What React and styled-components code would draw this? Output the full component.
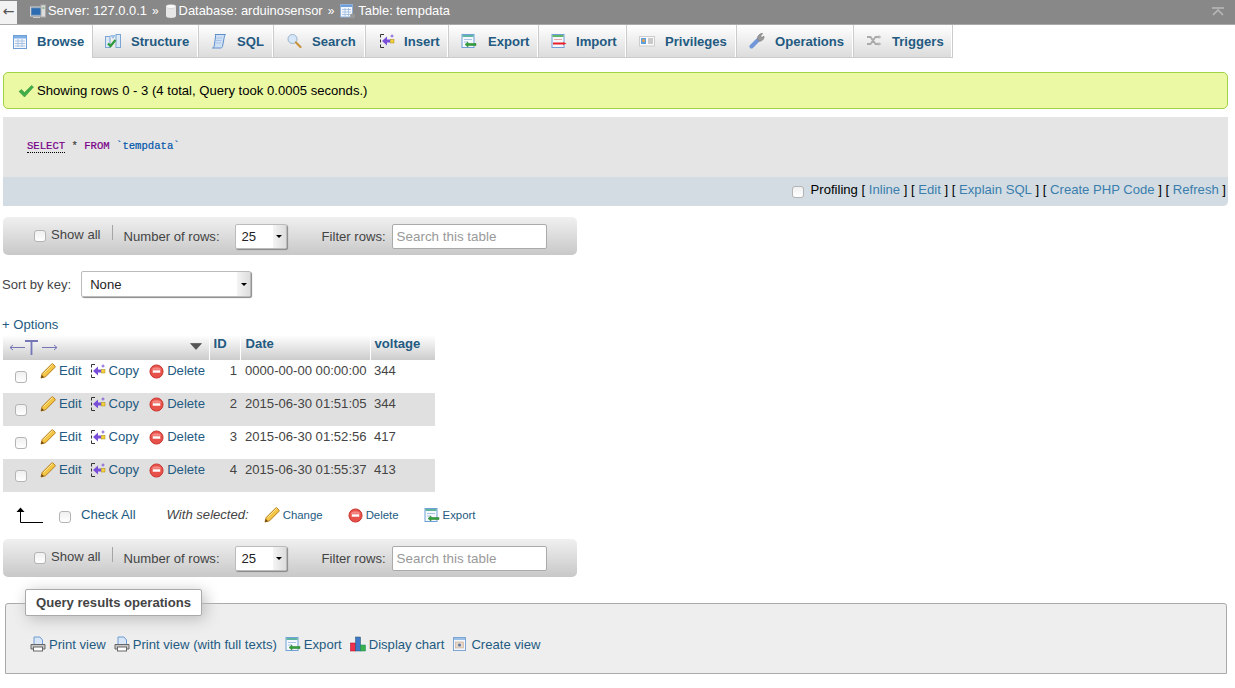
import React from 'react';
import styled, { createGlobalStyle } from 'styled-components';

const GlobalStyle = createGlobalStyle`
  html, body { margin: 0; padding: 0; background: #fff; }
  body {
    font-family: "Liberation Sans", Arial, sans-serif;
    font-size: 13.1px;
    color: #444;
    overflow: hidden;
  }
`;

const Page = styled.div`
  width: 1235px;
  height: 688px;
  overflow: hidden;
`;

const TopBar = styled.div`
  height: 24px;
  background: #888;
  border-bottom: 1px solid #aaa;
  display: flex;
  align-items: center;
  color: #fff;
  font-size: 12.9px;
`;

const BackBox = styled.div`
  width: 17px;
  height: 23px;
  box-sizing: border-box;
  padding-bottom: 3px;
  background: #f2f2f2;
  color: #555;
  font-family: "DejaVu Sans", sans-serif;
  font-size: 14px;
  display: flex;
  align-items: center;
  justify-content: center;
  margin-right: 13px;
`;

const Crumb = styled.span`
  display: inline-flex;
  align-items: center;
  gap: 2px;
  white-space: nowrap;
  margin-top: -3px;
`;

const Sep = styled.span`
  margin: -3px 6px 0 5px;
  font-size: 12px;
`;

const Collapse = styled.svg`
  margin-left: auto;
  margin-right: 11px;
`;

const Tabs = styled.div`
  display: flex;
  height: 33px;
  width: 953px;
  background: linear-gradient(#fff, #dcdcdc);
  border-bottom: 1px solid #ccc;
  box-sizing: border-box;
`;

const Tab = styled.a`
  display: flex;
  align-items: center;
  width: ${p => p.$w}px;
  box-sizing: border-box;
  padding-left: ${p => p.$pad}px;
  gap: ${p => p.$gap}px;
  font-weight: bold;
  color: #235a81;
  white-space: nowrap;
  border-right: 1px solid #ccc;
  box-shadow: inset -1px 0 0 #fff;
  background: ${p => (p.$active ? '#fff' : 'transparent')};
  height: ${p => (p.$active ? '33px' : '32px')};
`;

const Message = styled.div`
  margin: 14px 7px 0 3px;
  height: 37px;
  box-sizing: border-box;
  background: #ebf8a4;
  border: 1px solid #a2d246;
  border-radius: 5px;
  display: flex;
  align-items: center;
  padding-left: 14px;
  gap: 3px;
  color: #000;
`;

const SqlBox = styled.div`
  margin: 8px 7px 0 3px;
  background: #e5e5e5;
  border-radius: 0 0 5px 0;
`;

const SqlText = styled.div`
  height: 60px;
  box-sizing: border-box;
  padding: 22px 0 0 24px;
  font-family: "Liberation Mono", "DejaVu Sans Mono", monospace;
  font-size: 10.6px;
  line-height: 14px;
  color: #444;
  -webkit-text-stroke: 0.2px;
`;

const Keyword = styled.span`
  color: #708;
  border-bottom: ${p => (p.$dotted ? '1px dotted #000' : 'none')};
`;

const Quoted = styled.span`
  color: #05a;
`;

const SqlTools = styled.div`
  height: 29px;
  box-sizing: border-box;
  padding: 0 2px 5px 0;
  background: #d3dce3;
  border-radius: 0 0 5px 0;
  display: flex;
  align-items: center;
  justify-content: flex-end;
  color: #000;
  white-space: pre;
`;

const BlueLink = styled.a`
  color: #3a7ead;
`;

const Checkbox = styled.span`
  display: inline-block;
  flex: none;
  width: 10px;
  height: 10px;
  background: linear-gradient(#f0f0f0, #fff);
  border: 1px solid #b4b4b4;
  border-radius: 3px;
  margin: ${p => p.$m || '0'};
`;

const NavBar = styled.div`
  width: 574px;
  height: 38px;
  box-sizing: border-box;
  margin: ${p => p.$m};
  background: linear-gradient(#f0f0f0, #c8c8c8);
  border-radius: 5px;
  display: flex;
  align-items: center;
  padding-left: 31px;
  color: #444;
`;

const ShowAll = styled.span`
  margin-left: 5px;
  position: relative;
  top: -2px;
`;

const Pipe = styled.span`
  width: 1px;
  height: 15px;
  background: #a5a5a5;
  margin: 0 11px 0 11px;
  position: relative;
  top: -4px;
`;

const FakeSelect = styled.div`
  width: ${p => p.$w}px;
  height: ${p => p.$h}px;
  box-sizing: border-box;
  margin-left: ${p => p.$ml}px;
  background: #fff;
  border: 1px solid #bbb;
  border-radius: 2px;
  box-shadow: 1px 1px 1px #888;
  display: flex;
  align-items: center;
  padding-left: ${p => p.$pl}px;
  color: #222;
  position: relative;
`;

const SelectArrow = styled.span`
  position: absolute;
  right: 0;
  top: 0;
  bottom: 0;
  width: 13px;
  background: linear-gradient(90deg, #f4f4f4, #ddd);
  display: flex;
  align-items: center;
  justify-content: center;
  &::after {
    content: '';
    border-left: 3px solid transparent;
    border-right: 3px solid transparent;
    border-top: 3px solid #000;
  }
`;

const FilterLabel = styled.span`
  margin-left: 35px;
`;

const SearchInput = styled.div`
  width: 155px;
  height: 25px;
  box-sizing: border-box;
  margin-left: 6px;
  background: #fff;
  border: 1px solid #aaa;
  border-radius: 2px;
  display: flex;
  align-items: center;
  padding-left: 4px;
  color: #999;
  font-size: 13.4px;
`;

const SortRow = styled.div`
  margin: 16px 0 0 2px;
  display: flex;
  align-items: center;
  color: #444;
`;

const Options = styled.div`
  margin: 18px 0 0 2px;
  height: 19px;
  line-height: 19px;
  color: #235a81;
`;

const Table = styled.table`
  margin: 1px 0 0 3px;
  width: 432px;
  border-collapse: collapse;
  table-layout: fixed;
  color: #444;
`;

const Th = styled.th`
  height: 25px;
  padding: 0 0 0 ${p => p.$pl || 4}px;
  box-sizing: border-box;
  background: linear-gradient(#fff, #ccc);
  border-right: ${p => (p.$last ? 'none' : '1px solid #fff')};
  color: #235a81;
  font-weight: bold;
  text-align: left;
  vertical-align: top;
  line-height: 17px;
`;

const HeadTools = styled.div`
  display: flex;
  align-items: center;
  justify-content: space-between;
  padding: 0 7px 0 6px;
  height: 25px;
`;

const SortMark = styled.svg`
  flex: none;
  margin-top: -3px;
`;

const Tr = styled.tr`
  background: ${p => (p.$odd ? '#e0e0e0' : '#fff')};
`;

const Td = styled.td`
  height: 33px;
  padding: 2px ${p => p.$pr || 0}px 0 ${p => p.$pl || 0}px;
  box-sizing: border-box;
  vertical-align: top;
  line-height: 18px;
  text-align: ${p => p.$align || 'left'};
  white-space: nowrap;
`;

const Actions = styled.div`
  display: flex;
  align-items: flex-start;
  padding-left: 12px;
`;

const ActionLink = styled.a`
  display: inline-flex;
  align-items: center;
  gap: 3px;
  color: #235a81;
  margin-left: ${p => p.$ml || 0}px;
  white-space: nowrap;
`;

const BulkRow = styled.div`
  display: flex;
  align-items: center;
  height: 20px;
  margin: 13px 0 0 16px;
  color: #235a81;
`;

const CheckAll = styled.span`
  margin-top: -2px;
`;

const WithSelected = styled.em`
  color: #444;
  margin: -2px 15px 0 31px;
`;

const SmallAction = styled.a`
  display: inline-flex;
  align-items: center;
  gap: 3px;
  color: #235a81;
  font-size: 11.4px;
  margin-right: ${p => p.$mr}px;
`;

const Fieldset = styled.div`
  position: relative;
  margin: 26px 8px 0 5px;
  height: 71px;
  box-sizing: border-box;
  background: #eee;
  border: 1px solid #aaa;
  border-radius: 3px 3px 0 0;
  display: flex;
  align-items: center;
  padding: 11px 0 0 24px;
  gap: 8px;
`;

const Legend = styled.div`
  position: absolute;
  left: 19px;
  top: -15px;
  width: 177px;
  height: 27px;
  box-sizing: border-box;
  background: #fff;
  border: 1px solid #aaa;
  border-radius: 2px;
  box-shadow: 3px 3px 15px #bbb;
  display: flex;
  align-items: center;
  justify-content: center;
  font-weight: bold;
  color: #444;
`;

const OpLink = styled.a`
  display: inline-flex;
  align-items: center;
  gap: 3px;
  color: #235a81;
  white-space: nowrap;
`;

const Ico = ({ s = 16, children }) => (
  <svg width={s} height={s} viewBox="0 0 16 16" style={{ flex: 'none' }}>
    {children}
  </svg>
);

const SheetIcon = ({ s }) => (
  <Ico s={s}>
    <rect x="1.5" y="1.5" width="13" height="13" fill="#f4f8fd" stroke="#6e9fd6" />
    <rect x="2" y="2" width="12" height="2.5" fill="#7fb0e4" />
    <path d="M3 7h10M3 9.5h10M3 12h10M6 5v8M10 5v8" stroke="#a9c4e2" fill="none" />
  </Ico>
);

const StructureIcon = () => (
  <Ico>
    <rect x="0.5" y="3.5" width="4.5" height="11" fill="#dbe8f6" stroke="#7ba6d4" />
    <rect x="11" y="1.5" width="4.5" height="13" fill="#dbe8f6" stroke="#7ba6d4" />
    <path d="M5 2h6l-3 4z" fill="#9cc0e6" />
    <path d="M3 10.5l2.500 2.500 5-6" stroke="#2f9a3a" strokeWidth="2.200" fill="none" />
  </Ico>
);

const SqlIcon = () => (
  <Ico>
    <path d="M4 1.500h10.500c-1 1-1 2-1.500 4l-1.500 8c-.3 1-1 1.500-2 1.500H1.500c1 0 1.500-.8 1.700-1.800L4.500 4C4.700 3 4.500 2 4 1.500z" fill="#cfe0f5" stroke="#5f8fcb" />
    <path d="M5.500 5h5.500M5 7.500h5.500M4.500 10h5.500" stroke="#a8c4e8" fill="none" />
  </Ico>
);

const SearchIcon = () => (
  <Ico>
    <circle cx="6.500" cy="6" r="4.500" fill="#d5e7f8" stroke="#9ab2c9" />
    <path d="M10 9.500l4.500 4.500" stroke="#c8913c" strokeWidth="2.200" strokeLinecap="round" />
  </Ico>
);

const BracketArrow = ({ fill = '#7a4fd8' }) => (
  <Ico>
    <path d="M5 1.500H1.500v3M1.500 6.500v3M1.500 11.500v3H5" stroke="#333" fill="none" />
    <path d="M3 8l5-4.500V6.500h3v3H8v3z" fill={fill} />
    <rect x="11.500" y="6.500" width="3.500" height="3.500" fill="#f5d03c" stroke="#a88a10" strokeWidth=".5" />
    <path d="M13 1.500v3M11.500 3h3" stroke={fill} strokeWidth=".9" />
  </Ico>
);

const ExportIcon = ({ s }) => (
  <Ico s={s}>
    <rect x="1" y="1.500" width="12" height="13" fill="#f4f8fd" stroke="#6e9fd6" />
    <rect x="1.500" y="2" width="11" height="2" fill="#5fb5a0" />
    <path d="M3 6.500h8M3 9h4" stroke="#a9c4e2" />
    <path d="M4 11.500l3-2.500v1.500h8v2H7V14z" fill="#35a03c" stroke="#1e7a26" strokeWidth=".5" />
  </Ico>
);

const ImportIcon = () => (
  <Ico>
    <rect x="1" y="1.500" width="12" height="13" fill="#f4f8fd" stroke="#6e9fd6" />
    <rect x="1.500" y="2" width="11" height="2" fill="#5fb56a" />
    <path d="M3 6.500h8" stroke="#e0a8a8" />
    <path d="M2 9.500h10v2H2z" fill="#e8202c" />
    <path d="M12 9l3.500 1.500L12 12z" fill="#e8202c" />
  </Ico>
);

const PrivilegesIcon = () => (
  <Ico>
    <rect x="0.500" y="3.500" width="15" height="9.500" fill="#fafafa" stroke="#ccc" />
    <rect x="2" y="5" width="5" height="6" fill="#5d9ee0" />
    <circle cx="4.500" cy="7.500" r="1.500" fill="#e8a040" />
    <path d="M9 6h5M9 8h5M9 10h5" stroke="#999" fill="none" />
  </Ico>
);

const WrenchIcon = () => (
  <Ico>
    <path d="M2.500 13.500L9 7" stroke="#7197d8" strokeWidth="4" strokeLinecap="round" />
    <path d="M8.500 6c0-3 2-5.500 5-5.500l-2 2.500 1 1.500 2.500-1c0 3-2.500 5-5 4.500z" fill="#999" stroke="#888" />
  </Ico>
);

const TriggersIcon = () => (
  <Ico>
    <path d="M1 4h3.500l5 7H13M1 11h3.500l5-7H13" stroke="#aaa" strokeWidth="1.800" fill="none" />
    <path d="M12.500 2l3 2-3 2zM12.500 9l3 2-3 2z" fill="#bbb" />
  </Ico>
);

const ServerIcon = () => (
  <Ico>
    <rect x="0.500" y="4" width="12" height="9" fill="#5d86b4" stroke="#d4d4d4" />
    <rect x="2" y="5.500" width="9" height="6" fill="#2d6cb0" />
    <rect x="11" y="2" width="4.500" height="12" fill="#ddd" stroke="#aaa" />
    <path d="M12.500 5h2" stroke="#3c8f3c" />
    <path d="M3 14.500h7" stroke="#ccc" />
  </Ico>
);

const DbIcon = () => (
  <svg width="12" height="16" viewBox="0 0 12 16" style={{ flex: 'none' }}>
    <path d="M1 3.500v9.500c0 1.200 2.200 2 5 2s5-.8 5-2V3.500z" fill="#e6e6e6" />
    <ellipse cx="6" cy="3.500" rx="5" ry="2" fill="#fafafa" stroke="#bbb" strokeWidth=".5" />
  </svg>
);

const TableSmIcon = () => (
  <Ico>
    <rect x="0.500" y="1.500" width="12" height="12.500" fill="#f4f8fd" stroke="#8fb0d8" />
    <rect x="1" y="2" width="11" height="2" fill="#6f9fd8" />
    <path d="M2 6.500h9M2 9h9M2 11.500h9M5 5v8M8.500 5v8" stroke="#a9c4e2" />
    <circle cx="12.500" cy="13" r="2.500" fill="#999" />
  </Ico>
);

const CheckIcon = () => (
  <Ico>
    <path d="M1 8.500l2.500-2 3 3L13.500 2.500 15.500 4l-9 10z" fill="#3fae49" stroke="#2b8a35" strokeWidth=".5" />
  </Ico>
);

const PencilIcon = () => (
  <Ico>
    <path d="M1 15l1.200-4.500L11.500 1.200c.6-.5 1.200-.5 1.700 0l1.600 1.600c.5.500.5 1.100 0 1.700L5.500 13.800z" fill="#f3c545" stroke="#b67a1a" />
    <path d="M1 15l.8-3 2.200 2.200z" fill="#6b4510" />
    <path d="M3.500 10.500l9-9" stroke="#fbe79a" />
  </Ico>
);

const DeleteIcon = () => (
  <Ico s={15}>
    <circle cx="8" cy="8" r="7" fill="#e8504a" stroke="#c9352f" />
    <path d="M2.500 6c2-3.500 9-3.500 11 0" fill="#f58a84" />
    <rect x="4" y="6.700" width="8" height="2.600" fill="#fff" />
  </Ico>
);

const PrintIcon = () => (
  <Ico>
    <path d="M4 1h6l2.500 3v5h-8.500z" fill="#d8e6f8" stroke="#6f9bd0" />
    <path d="M1 8.500h14v4.500H1z" fill="#c8c8c8" stroke="#666" />
    <rect x="3.500" y="11" width="9" height="4" fill="#fff" stroke="#666" />
  </Ico>
);

const ChartIcon = () => (
  <Ico>
    <rect x="0.500" y="7" width="5" height="8" fill="#f0304a" stroke="#a02" strokeWidth=".5" />
    <rect x="5.500" y="1" width="5" height="14" fill="#3f78c8" stroke="#256" strokeWidth=".5" />
    <rect x="10.500" y="9" width="5" height="6" fill="#3cb04a" stroke="#186" strokeWidth=".5" />
  </Ico>
);

const ViewIcon = () => (
  <Ico>
    <rect x="1.500" y="1.500" width="12" height="13" fill="#f4f8fd" stroke="#7ba6d4" />
    <rect x="2" y="2" width="11" height="2" fill="#9cbfe6" />
    <rect x="3.500" y="6" width="8" height="6" fill="#e6d6c6" stroke="#c8a890" strokeWidth=".6" />
    <circle cx="7.500" cy="9" r="1.500" fill="#5a78a8" />
  </Ico>
);

const ColumnTools = () => (
  <svg width="48" height="15" viewBox="0 0 48 15" style={{ flex: 'none' }}>
    <path d="M0 7.500h15M0 7.500l3-2.500M0 7.500l3 2.500" stroke="#7476b8" fill="none" />
    <path d="M15 1h13M21.500 1v14" stroke="#7476b8" strokeWidth="1.800" fill="none" />
    <path d="M32 7.500h15M47 7.500l-3-2.500M47 7.500l-3 2.500" stroke="#7476b8" fill="none" />
  </svg>
);

const SortDown = () => (
  <SortMark width="12" height="7" viewBox="0 0 12 7">
    <path d="M0.500 0.500h11L6 6.500z" fill="#555" stroke="#333" strokeWidth=".5" />
  </SortMark>
);

const ArrowLeftUp = () => (
  <svg width="28" height="16" viewBox="0 0 28 16" style={{ flex: 'none' }}>
    <path d="M4.500 4v11.500H27" stroke="#000" strokeWidth="1" fill="none" />
    <path d="M0.500 5L4.500 0.500 8.500 5z" fill="#000" />
  </svg>
);

const tabs = [
  { label: 'Browse', icon: <SheetIcon />, w: 93, pad: 12, gap: 9, active: true },
  { label: 'Structure', icon: <StructureIcon />, w: 106, pad: 12, gap: 10 },
  { label: 'SQL', icon: <SqlIcon />, w: 75, pad: 12, gap: 10 },
  { label: 'Search', icon: <SearchIcon />, w: 92, pad: 12, gap: 10 },
  { label: 'Insert', icon: <BracketArrow />, w: 83, pad: 13, gap: 9 },
  { label: 'Export', icon: <ExportIcon />, w: 90, pad: 12, gap: 11 },
  { label: 'Import', icon: <ImportIcon />, w: 88, pad: 12, gap: 9 },
  { label: 'Privileges', icon: <PrivilegesIcon />, w: 110, pad: 12, gap: 10 },
  { label: 'Operations', icon: <WrenchIcon />, w: 117, pad: 12, gap: 10 },
  { label: 'Triggers', icon: <TriggersIcon />, w: 99, pad: 12, gap: 10 },
];

const rows = [
  { id: 1, date: '0000-00-00 00:00:00', voltage: 344 },
  { id: 2, date: '2015-06-30 01:51:05', voltage: 344 },
  { id: 3, date: '2015-06-30 01:52:56', voltage: 417 },
  { id: 4, date: '2015-06-30 01:55:37', voltage: 413 },
];

const Nav = ({ m }) => (
  <NavBar $m={m}>
    <Checkbox />
    <ShowAll>Show all</ShowAll>
    <Pipe />
    <span>Number of rows:</span>
    <FakeSelect $w={52} $h={25} $ml={15} $pl={6}>
      25
      <SelectArrow />
    </FakeSelect>
    <FilterLabel>Filter rows:</FilterLabel>
    <SearchInput>Search this table</SearchInput>
  </NavBar>
);

export default function App() {
  return (
    <Page>
      <GlobalStyle />
      <TopBar>
        <BackBox>←</BackBox>
        <Crumb><ServerIcon />Server: 127.0.0.1</Crumb>
        <Sep>»</Sep>
        <Crumb><DbIcon />Database: arduinosensor</Crumb>
        <Sep>»</Sep>
        <Crumb><TableSmIcon />Table: tempdata</Crumb>
        <Collapse width="12" height="10" viewBox="0 0 12 10">
          <path d="M0 1h12M1 8l5-5 5 5" stroke="#bbb" strokeWidth="1.500" fill="none" />
        </Collapse>
      </TopBar>
      <Tabs>
        {tabs.map(t => (
          <Tab key={t.label} $w={t.w} $pad={t.pad} $gap={t.gap} $active={t.active}>
            {t.icon}
            {t.label}
          </Tab>
        ))}
      </Tabs>
      <Message>
        <CheckIcon />
        Showing rows 0 - 3 (4 total, Query took 0.0005 seconds.)
      </Message>
      <SqlBox>
        <SqlText>
          <Keyword $dotted>SELECT</Keyword> * <Keyword>FROM</Keyword> <Quoted>`tempdata`</Quoted>
        </SqlText>
        <SqlTools>
          <Checkbox $m="5px 7px 0 0" />
          Profiling [ <BlueLink>Inline</BlueLink> ] [ <BlueLink>Edit</BlueLink> ] [ <BlueLink>Explain SQL</BlueLink> ] [ <BlueLink>Create PHP Code</BlueLink> ] [ <BlueLink>Refresh</BlueLink> ]
        </SqlTools>
      </SqlBox>
      <Nav m="11px 0 0 3px" />
      <SortRow>
        Sort by key:
        <FakeSelect $w={170} $h={26} $ml={10} $pl={8}>
          None
          <SelectArrow />
        </FakeSelect>
      </SortRow>
      <Options>+ Options</Options>
      <Table>
        <colgroup>
          <col style={{ width: 206 }} />
          <col style={{ width: 31 }} />
          <col style={{ width: 130 }} />
          <col style={{ width: 65 }} />
        </colgroup>
        <thead>
          <tr>
            <Th $pl={1}>
              <HeadTools>
                <ColumnTools />
                <SortDown />
              </HeadTools>
            </Th>
            <Th>ID</Th>
            <Th $pl={5}>Date</Th>
            <Th $pl={4} $last>voltage</Th>
          </tr>
        </thead>
        <tbody>
          {rows.map((r, i) => (
            <Tr key={r.id} $odd={i % 2 === 1}>
              <Td>
                <Actions>
                  <Checkbox $m="9px 13px 0 0" />
                  <ActionLink><PencilIcon />Edit</ActionLink>
                  <ActionLink $ml={8}><BracketArrow />Copy</ActionLink>
                  <ActionLink $ml={10}><DeleteIcon />Delete</ActionLink>
                </Actions>
              </Td>
              <Td $align="right" $pr={3}>{r.id}</Td>
              <Td $pl={5}>{r.date}</Td>
              <Td $pl={4}>{r.voltage}</Td>
            </Tr>
          ))}
        </tbody>
      </Table>
      <BulkRow>
        <ArrowLeftUp />
        <Checkbox $m="3px 10px 0 15px" />
        <CheckAll>Check All</CheckAll>
        <WithSelected>With selected:</WithSelected>
        <SmallAction $mr={25}><PencilIcon />Change</SmallAction>
        <SmallAction $mr={25}><DeleteIcon />Delete</SmallAction>
        <SmallAction $mr={0}><ExportIcon />Export</SmallAction>
      </BulkRow>
      <Nav m="14px 0 0 3px" />
      <Fieldset>
        <Legend>Query results operations</Legend>
        <OpLink><PrintIcon />Print view</OpLink>
        <OpLink><PrintIcon />Print view (with full texts)</OpLink>
        <OpLink><ExportIcon />Export</OpLink>
        <OpLink><ChartIcon />Display chart</OpLink>
        <OpLink><ViewIcon />Create view</OpLink>
      </Fieldset>
    </Page>
  );
}
